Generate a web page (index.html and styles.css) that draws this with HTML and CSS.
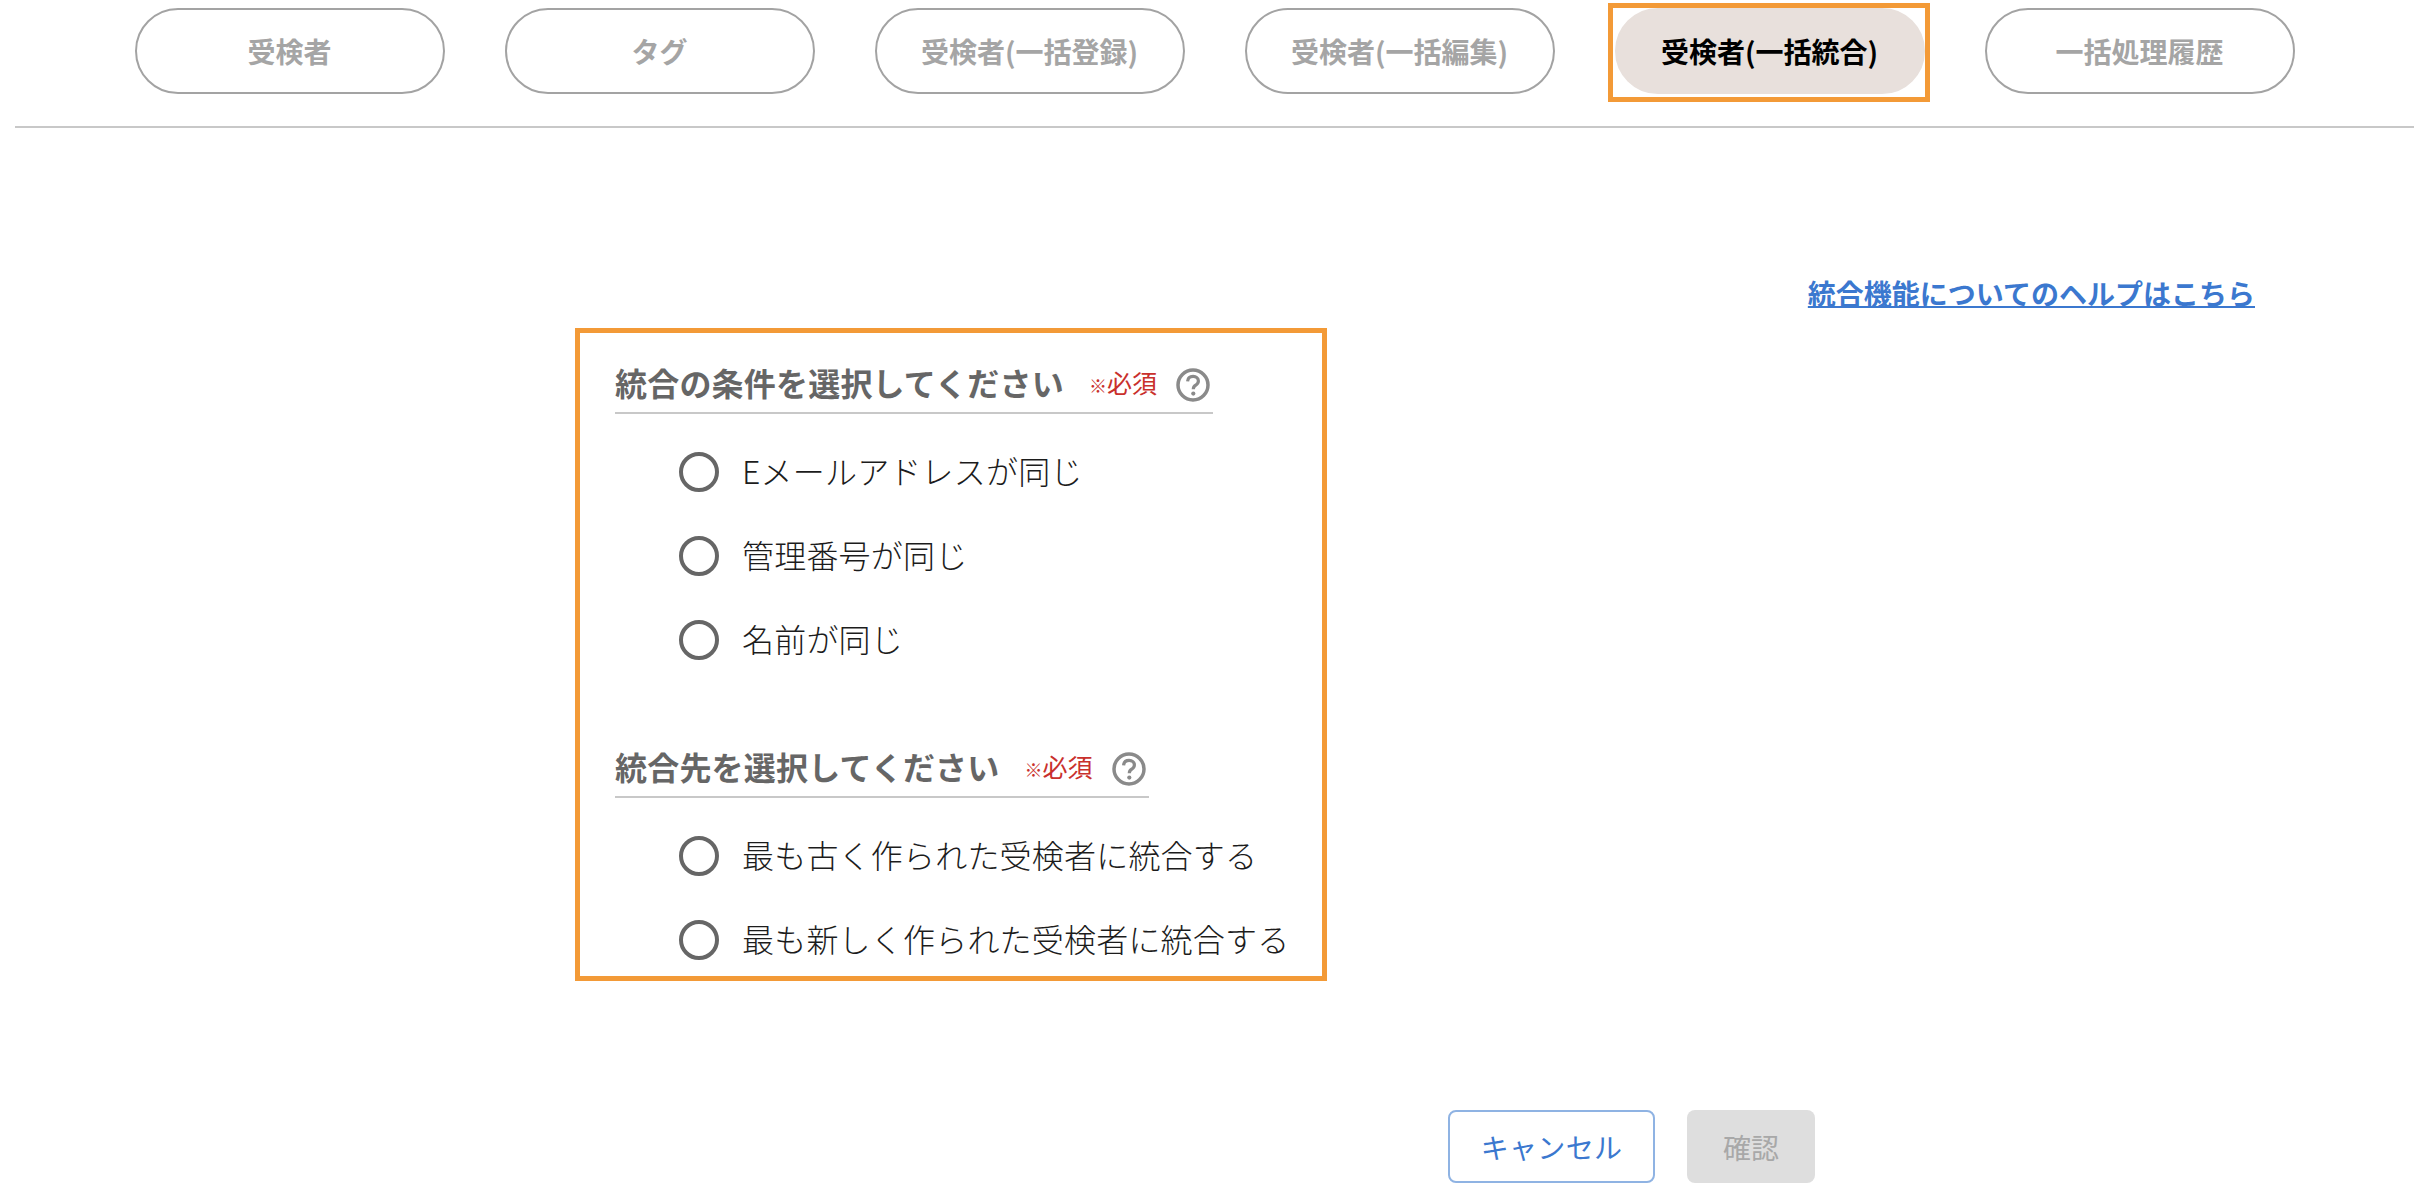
FILE: index.html
```html
<!DOCTYPE html>
<html lang="ja">
<head>
  <meta charset="UTF-8">
  <meta name="viewport" content="width=device-width, initial-scale=1.0">
  <title>受検者(一括統合)</title>
  <link rel="stylesheet" href="styles.css">
</head>
<body>
  <header class="tabs-bar">
    <nav class="tabs">
      <a class="tab">受検者</a>
      <a class="tab">タグ</a>
      <a class="tab">受検者(一括登録)</a>
      <a class="tab">受検者(一括編集)</a>
      <a class="tab tab-active">受検者(一括統合)</a>
      <a class="tab">一括処理履歴</a>
    </nav>
  </header>

  <main>
    <div class="help-row">
      <a class="help-link" href="#">統合機能についてのヘルプはこちら</a>
    </div>

    <form class="merge-form">
      <section class="group">
        <h2 class="group-title">
          <span class="title-text">統合の条件を選択してください</span>
          <span class="required"><span class="mark">※</span>必須</span>
          <svg class="help-icon" viewBox="0 0 34 34"><circle cx="17" cy="17" r="15" fill="none" stroke="#8a8a8a" stroke-width="3.5"/><path d="M11.6 13.4c.2-3.200 2.500-5 5.500-5 3 0 5.300 1.800 5.300 4.500 0 2-1 3.100-2.700 4.300-1.700 1.100-2.400 2-2.400 4" fill="none" stroke="#8a8a8a" stroke-width="3.200"/><circle cx="17.300" cy="25.600" r="2.100" fill="#8a8a8a"/></svg>
        </h2>
        <ul class="options">
          <li class="option"><span class="radio"></span><span class="option-label">Eメールアドレスが同じ</span></li>
          <li class="option"><span class="radio"></span><span class="option-label">管理番号が同じ</span></li>
          <li class="option"><span class="radio"></span><span class="option-label">名前が同じ</span></li>
        </ul>
      </section>

      <section class="group">
        <h2 class="group-title">
          <span class="title-text">統合先を選択してください</span>
          <span class="required"><span class="mark">※</span>必須</span>
          <svg class="help-icon" viewBox="0 0 34 34"><circle cx="17" cy="17" r="15" fill="none" stroke="#8a8a8a" stroke-width="3.5"/><path d="M11.6 13.4c.2-3.200 2.500-5 5.500-5 3 0 5.300 1.800 5.300 4.500 0 2-1 3.100-2.700 4.300-1.700 1.100-2.400 2-2.400 4" fill="none" stroke="#8a8a8a" stroke-width="3.200"/><circle cx="17.300" cy="25.600" r="2.100" fill="#8a8a8a"/></svg>
        </h2>
        <ul class="options">
          <li class="option"><span class="radio"></span><span class="option-label">最も古く作られた受検者に統合する</span></li>
          <li class="option"><span class="radio"></span><span class="option-label">最も新しく作られた受検者に統合する</span></li>
        </ul>
      </section>
    </form>

    <div class="actions">
      <button class="btn btn-cancel" type="button">キャンセル</button>
      <button class="btn btn-confirm" type="button" disabled>確認</button>
    </div>
  </main>
</body>
</html>
```

FILE: styles.css
```css
* {
  box-sizing: border-box;
}
body {
  font-family: "Noto Sans CJK JP", "Noto Sans", sans-serif;
  margin: 0;
  background: #fff;
  color: #333;
}
.tabs-bar {
  margin: 0 14px 0 15px;
  height: 128px;
  padding-top: 8px;
  border-bottom: 2px solid #c8c8c8;
}
.tabs {
  display: flex;
  justify-content: center;
  gap: 60px;
}
.tab {
  position: relative;
  display: flex;
  align-items: center;
  justify-content: center;
  width: 310px;
  height: 86px;
  border: 2px solid #a3a3a3;
  border-radius: 43px;
  font-size: 28px;
  font-weight: 700;
  color: #a5a5a5;
}
.tab-active {
  background: #e8e0dc;
  border-color: #e8e0dc;
  color: #000;
}
/* orange marker round the selected tab */
.tab-active::after {
  content: "";
  position: absolute;
  top: -7px;
  left: -9px;
  right: -7px;
  bottom: -10px;
  border: 5px solid #f39a37;
}
.help-row {
  display: flex;
  justify-content: flex-end;
  padding: 145px 173px 0 0;
}
.help-link {
  font-size: 28px;
  line-height: 40px;
  font-weight: 700;
  color: #3b78cf;
  text-decoration: underline;
  text-decoration-thickness: 2px;
}
.merge-form {
  width: 752px;
  margin: 15px 0 0 575px;
  padding: 30px 0 16px 35px;
  border: 5px solid #f39a37;
}
.group + .group {
  margin-top: 87px;
}
.group-title {
  display: inline-flex;
  align-items: center;
  height: 51px;
  margin: 0;
  padding: 0 3px 10px 0;
  border-bottom: 2px solid #c8c8c8;
  font-size: 32px;
  font-weight: 700;
  color: #666;
  vertical-align: top;
}
.title-text {
  margin-top: -2px;
  letter-spacing: 0.2px;
}
.required {
  margin: -2px 0 0 25px;
  font-size: 25px;
  font-weight: 400;
  color: #c9302c;
}
.mark {
  font-size: 18px;
}
.help-icon {
  width: 34px;
  height: 34px;
  margin: 5px 0 0 19px;
}
.options {
  list-style: none;
  margin: 38px 0 0;
  padding: 0 0 0 64px;
  display: flex;
  flex-direction: column;
  gap: 44px;
}
.option {
  display: flex;
  align-items: center;
  gap: 23px;
  height: 40px;
  font-size: 32px;
  font-weight: 300;
  white-space: nowrap;
  color: #1c1c1c;
}
.option-label {
  margin-top: -4px;
  letter-spacing: 0.2px;
}
.radio {
  width: 40px;
  height: 40px;
  flex: none;
  border: 4px solid #666;
  border-radius: 50%;
}
.actions {
  display: flex;
  gap: 32px;
  margin: 129px 0 0 1448px;
}
.btn {
  height: 73px;
  border-radius: 8px;
  font-family: inherit;
  font-size: 28px;
}
.btn-cancel {
  width: 207px;
  background: #fff;
  border: 2px solid #8fb3e3;
  color: #3b78cf;
  letter-spacing: 0.3px;
}
.btn-confirm {
  width: 128px;
  background: #dedede;
  border: none;
  color: #a8a8a8;
}
```
